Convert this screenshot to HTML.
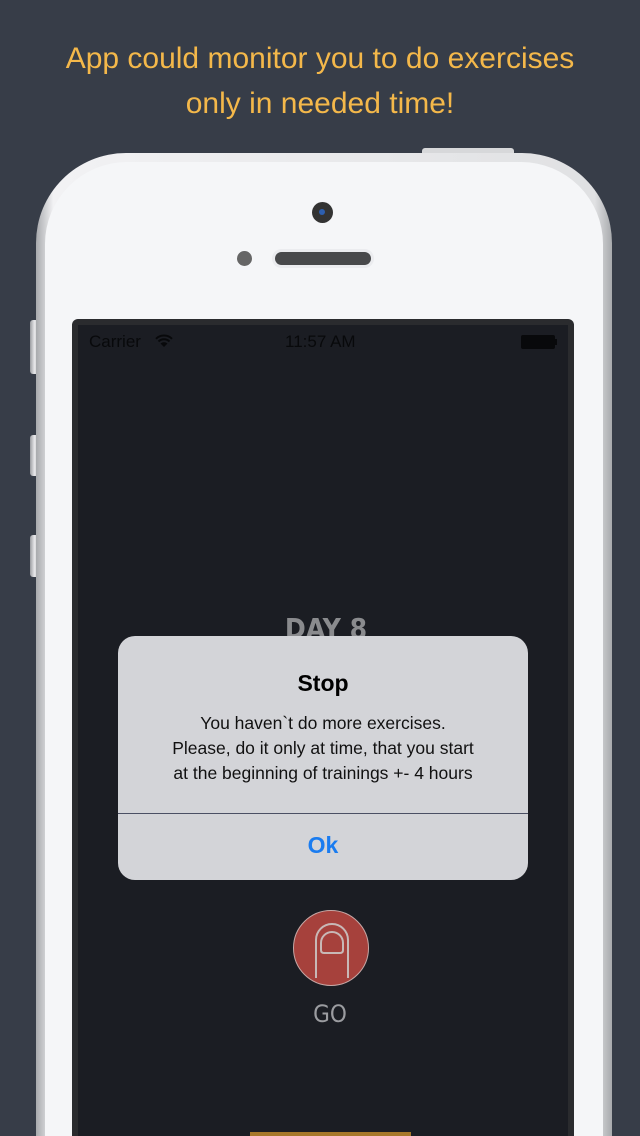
<!DOCTYPE html>
<html><head><style>
*{margin:0;padding:0;box-sizing:border-box}
html,body{width:640px;height:1136px;overflow:hidden}
body{background:#373d48;font-family:"Liberation Sans",sans-serif}
#w{position:relative;width:640px;height:1136px;overflow:hidden}
.title{position:absolute;top:36px;left:0;width:640px;text-align:center;color:#f4b84a;font-size:30px;line-height:45px}
.btn{position:absolute;left:30px;width:9px;background:linear-gradient(90deg,#9a9ca0,#e8e8ea,#b8babd);border-radius:3px}
.phone{position:absolute;left:36px;top:153px;width:576px;height:983px;border-radius:90px 90px 0 0;background:linear-gradient(90deg,#a8aaad,#f2f2f4 3%,#e0e1e3 97%,#a8aaad);}
.face{position:absolute;left:45px;top:162px;width:558px;height:974px;border-radius:82px 82px 0 0;background:#f5f6f8}
.top-btn{position:absolute;left:422px;top:148px;width:92px;height:8px;background:#d7d8da;border-radius:3px 3px 0 0}
.cam{position:absolute;left:312px;top:202px;width:21px;height:21px;border-radius:50%;background:#333;}
.cam::after{content:"";position:absolute;left:7px;top:7px;width:6px;height:6px;border-radius:50%;background:#2d5fb0}
.dot{position:absolute;left:237px;top:251px;width:15px;height:15px;border-radius:50%;background:#666}
.spk{position:absolute;left:275px;top:252px;width:96px;height:13px;border-radius:7px;background:#48494b;box-shadow:0 0 0 3px #ebecef}
.bezel{position:absolute;left:72px;top:319px;width:502px;height:817px;background:#2a2b2e;border-radius:6px 6px 0 0}
.screen{position:absolute;left:78px;top:325px;width:490px;height:811px;background:#1b1d23}
.sb{position:absolute;top:332px;font-size:17px;color:#08090b}
.day{position:absolute;left:6px;width:640px;top:612px;text-align:center;color:#8a8b8e;font-size:28px;font-weight:bold;font-family:"DejaVu Sans Condensed","Liberation Sans",sans-serif}
.alert{position:absolute;left:118px;top:636px;width:410px;height:244px;border-radius:17px;background:#d3d4d8;text-align:center}
.alert h1{font-size:23px;font-weight:bold;margin-top:34px;color:#000}
.alert p{font-size:17.5px;line-height:25px;margin-top:14px;color:#111}
.sep{position:absolute;left:0;top:177px;width:410px;height:1px;background:#4a4f63}
.ok{position:absolute;top:196px;width:410px;font-size:23px;font-weight:bold;color:#1a7cf0}
.go{position:absolute;left:293px;top:910px;width:76px;height:76px;border-radius:50%;background:#a6413c;border:1.5px solid #c7a8a6}
.gotxt{position:absolute;left:10px;width:640px;top:1000px;text-align:center;color:#9b9ca0;font-size:24px;font-family:"DejaVu Sans Condensed","Liberation Sans",sans-serif}
.bar{position:absolute;left:250px;top:1132px;width:161px;height:4px;background:#a7782a}
</style></head><body><div id="w">
<div class="title">App could monitor you to do exercises<br>only in needed time!</div>
<div class="btn" style="top:320px;height:54px"></div>
<div class="btn" style="top:435px;height:41px"></div>
<div class="btn" style="top:535px;height:42px"></div>
<div class="top-btn"></div>
<div class="phone"></div>
<div class="face"></div>
<div class="cam"></div>
<div class="dot"></div>
<div class="spk"></div>
<div class="bezel"></div>
<div class="screen"></div>
<div class="sb" style="left:89px">Carrier</div>
<svg style="position:absolute;left:154px;top:333px" width="20" height="15" viewBox="0 0 20 15"><path d="M10 14 L6.5 10.5 A5 5 0 0 1 13.5 10.5Z" fill="#08090b"/><path d="M4.5 8.5 A8 8 0 0 1 15.5 8.5 M2 5.8 A11.5 11.5 0 0 1 18 5.8" stroke="#08090b" stroke-width="2" fill="none"/></svg>
<div class="sb" style="left:285px">11:57 AM</div>
<div style="position:absolute;left:521px;top:335px;width:34px;height:14px;background:#08090b;border-radius:2px"></div>
<div style="position:absolute;left:555px;top:339px;width:2px;height:6px;background:#08090b"></div>
<div class="day">DAY 8</div>
<div class="alert"><h1>Stop</h1><p>You haven`t do more exercises.<br>Please, do it only at time, that you start<br>at the beginning of trainings +- 4 hours</p><div class="sep"></div><div class="ok">Ok</div></div>
<div class="go"></div>
<svg style="position:absolute;left:293px;top:910px" width="78" height="78" viewBox="0 0 78 78"><path d="M23 68 V30 A16 16 0 0 1 55 30 V68" stroke="#c8b8b6" stroke-width="2" fill="none"/><path d="M28 40 V33 A11 11 0 0 1 50 33 V40 Q50 43 47 43 H31 Q28 43 28 40Z" stroke="#c8b8b6" stroke-width="2" fill="none"/></svg>
<div class="gotxt">GO</div>
<div class="bar"></div>
</div></body></html>
